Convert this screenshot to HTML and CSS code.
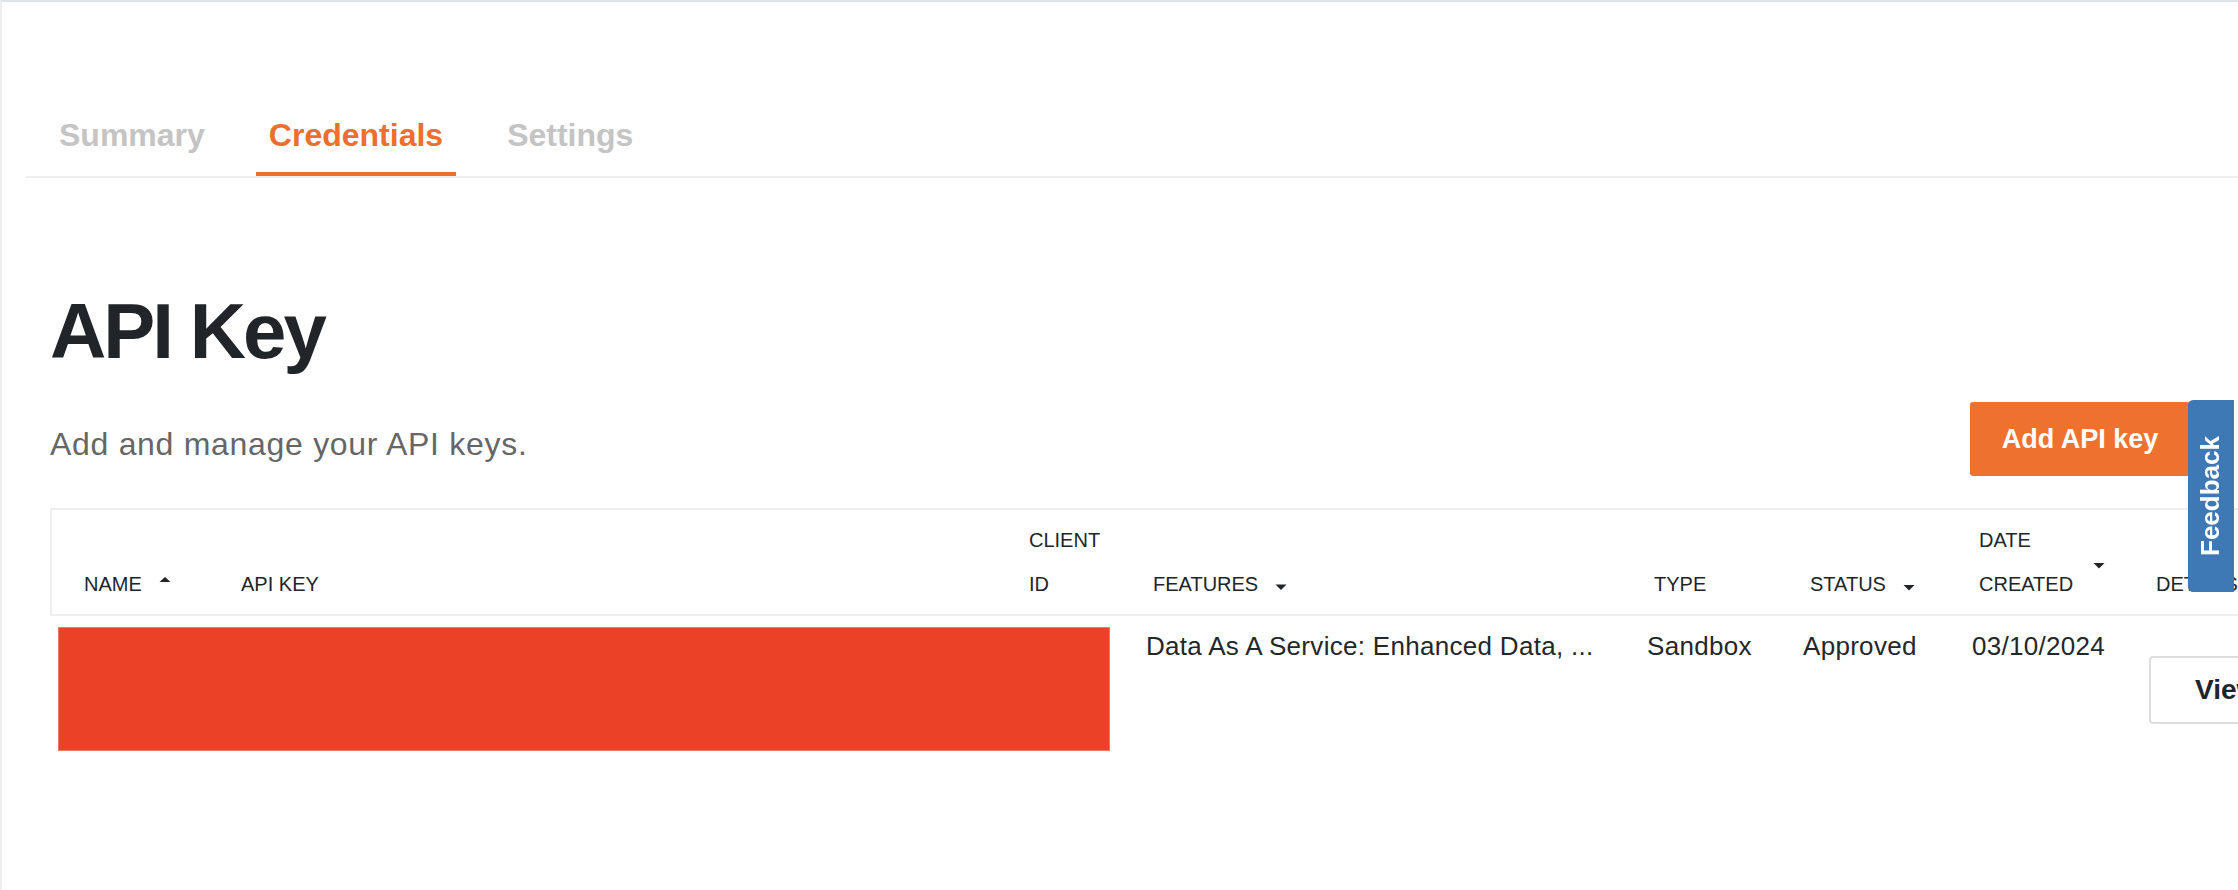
FILE: index.html
```html
<!doctype html>
<html lang="en">
  <head>
    <meta charset="UTF-8" />
    <meta name="viewport" content="width=device-width, initial-scale=1.0" />
    <title>API Key - Credentials</title>
    <link rel="stylesheet" href="styles.css">
  </head>
  <body>
    <nav class="tabs">
      <a class="tab">Summary</a>
      <a class="tab active">Credentials</a>
      <a class="tab">Settings</a>
    </nav>

    <main class="content">
      <h1 class="page-title">API Key</h1>

      <div class="intro-row">
        <p class="intro">Add and manage your API keys.</p>
        <button class="add-btn">Add API key</button>
      </div>

      <!-- API key list -->
      <div class="keys-table">
        <div class="thead cols">
          <div class="th">
            <span>NAME</span>
            <svg class="sort" width="12" height="14" viewBox="0 0 12 14"><polygon points="0.5,5 6,0 11.5,5" /></svg>
          </div>
          <div class="th"><span>API KEY</span></div>
          <div class="th"><span>CLIENT<br>ID</span></div>
          <div class="th">
            <span>FEATURES</span>
            <svg class="sort" width="12" height="14" viewBox="0 0 12 14"><polygon points="0.5,7.5 11.5,7.5 6,13" /></svg>
          </div>
          <div class="th"><span>TYPE</span></div>
          <div class="th">
            <span>STATUS</span>
            <svg class="sort" width="12" height="14" viewBox="0 0 12 14"><polygon points="0.5,8 11.5,8 6,13.5" /></svg>
          </div>
          <div class="th">
            <span>DATE<br>CREATED</span>
            <svg class="sort date-sort" width="12" height="14" viewBox="0 0 12 14"><polygon points="0.5,8 11.5,8 6,13.5" /></svg>
          </div>
          <div class="th"><span>DETAILS</span></div>
        </div>

        <div class="trow cols">
          <div class="redacted"></div>
          <div class="td">Data As A Service: Enhanced Data, ...</div>
          <div class="td">Sandbox</div>
          <div class="td">Approved</div>
          <div class="td">03/10/2024</div>
          <div class="td-btn"><button class="view-btn">View</button></div>
        </div>
      </div>
    </main>

    <a class="feedback">Feedback</a>
  </body>
</html>
```

FILE: styles.css
```css
html,
body {
  height: 100%;
}

body {
  margin: 0;
  font-family: 'Liberation Sans', Arial, sans-serif;
  color: #212529;
  background: white;
  border-top: 2px solid #dfe3e7;
  border-left: 2px solid #eeeeee;
  overflow: hidden;
  box-sizing: border-box;
}

/* tabs */
.tabs {
  display: flex;
  gap: 38px;
  margin: 114px 0 0 24px;
  padding-left: 20px;
  border-bottom: 2px solid #eeeeee;
}

.tab {
  padding: 0 13px 18px;
  font-size: 32px;
  font-weight: 700;
  line-height: 38px;
  color: #c4c4c4;
  border-bottom: 4px solid transparent;
  cursor: pointer;
}

.tab.active {
  color: #ee6e2e;
  border-bottom-color: #ee6e2e;
}

/* page content */
.content {
  padding: 0 48px;
}

.page-title {
  margin: 114px 0 0;
  font-size: 78px;
  font-weight: 700;
  line-height: 78px;
  letter-spacing: -3px;
  color: #212529;
}

.intro-row {
  display: flex;
  justify-content: space-between;
  align-items: center;
  margin-top: 32px;
}

.intro {
  margin: 0;
  padding-top: 10px;
  font-size: 32px;
  line-height: 40px;
  letter-spacing: 0.7px;
  color: #666666;
}

.add-btn {
  width: 220px;
  height: 74px;
  padding: 0;
  border: none;
  border-radius: 3px;
  background: #ef7130;
  color: white;
  font-family: inherit;
  font-size: 27px;
  font-weight: 700;
  text-align: center;
  white-space: nowrap;
  cursor: pointer;
}

/* table */
.keys-table {
  width: max-content;
  margin-top: 32px;
}

.cols {
  display: grid;
  grid-template-columns: 157px 788px 124px 501px 156px 169px 177px 260px;
}

.thead {
  align-items: end;
  padding: 8px 0 8px 25px;
  border: 2px solid #eeeeee;
  border-right: none;
}

.th {
  display: flex;
  align-items: center;
  padding-left: 7px;
  font-size: 20px;
  line-height: 44px;
  color: #212529;
}

.sort {
  margin-left: 17px;
  fill: #212529;
}

.date-sort {
  margin-left: 20px;
}

.trow {
  align-items: start;
  padding-left: 27px;
}

.td {
  padding-top: 12px;
  font-size: 26px;
  line-height: 36px;
  letter-spacing: 0.3px;
  color: #24272a;
  white-space: nowrap;
}

.redacted {
  grid-column: 1 / 4;
  width: 1052px;
  height: 124px;
  margin: 11px 0 0 -19px;
  background: #ea4127;
  border: 1px solid #f07563;
  box-sizing: border-box;
}

.td-btn {
  padding-top: 40px;
}

.view-btn {
  height: 68px;
  padding: 0 44px;
  border: 2px solid #dddddd;
  border-radius: 4px;
  background: white;
  color: #212529;
  font-family: inherit;
  font-size: 28px;
  font-weight: 700;
  line-height: 64px;
  cursor: pointer;
}

/* feedback tab */
.feedback {
  position: fixed;
  top: 400px;
  right: 4px;
  width: 46px;
  height: 192px;
  display: flex;
  align-items: center;
  justify-content: center;
  background: #3f79b5;
  color: white;
  font-size: 26px;
  font-weight: 700;
  writing-mode: vertical-rl;
  transform: rotate(180deg);
  border-radius: 0 5px 5px 0;
  cursor: pointer;
}
```
